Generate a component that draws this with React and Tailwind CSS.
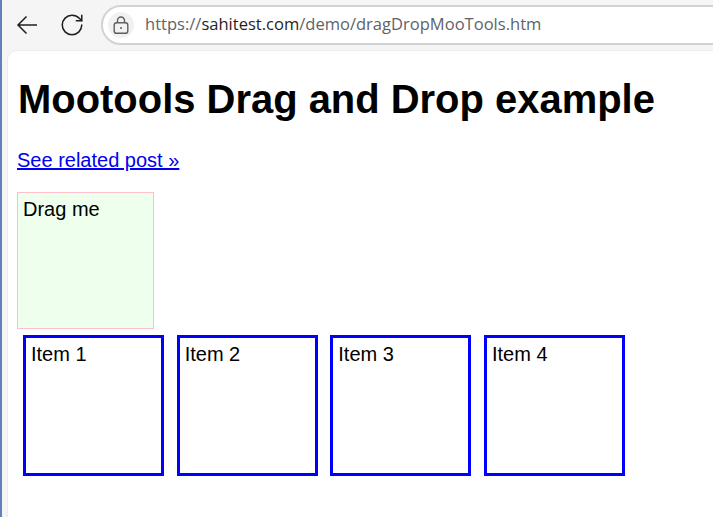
import { RotateCw } from 'lucide-react';

const items = ['Item 1', 'Item 2', 'Item 3', 'Item 4'];

export default function App() {
  return (
    <div className="w-[713px] h-[517px] overflow-hidden flex bg-[#f5f5f5] font-['Liberation_Sans',Arial,sans-serif] text-black">
      <div className="w-[2px] shrink-0 bg-[#6480b8]" />
      <div className="flex-1 min-w-0 flex flex-col">
        {/* Browser toolbar */}
        <div className="h-[50px] shrink-0 flex items-center pl-[14px] pb-[1px]">
          <svg width="22" height="20" viewBox="0 0 22 20" fill="none" stroke="#1f1f1f" strokeWidth="1.5">
            <path d="M21 10H2M10.5 1.5 2 10l8.5 8.5" />
          </svg>
          <RotateCw className="w-[26px] h-[26px] ml-[21px] text-[#1f1f1f]" strokeWidth={1.4} />
          <div className="ml-[16px] -mr-[20px] flex-1 h-[40px] flex items-center bg-white border-2 border-[#d3d3d3] rounded-l-[20px] pl-[5px]">
            <div className="w-[26px] h-[26px] rounded-full bg-[#f1f1f1] flex items-center justify-center">
              <svg width="18" height="20" viewBox="0 0 18 20" fill="none" stroke="#5f5f5f" strokeWidth="1.4">
                <path d="M5.5 8V5.5a3.5 3.5 0 0 1 7 0V8" />
                <rect x="2.2" y="7.7" width="13.6" height="10.6" rx="2.4" />
                <circle cx="9" cy="13" r="1" fill="#5f5f5f" stroke="none" />
              </svg>
            </div>
            <span className="ml-[11px] text-[16.55px] font-['Open_Sans',sans-serif] text-[#5f6368] whitespace-nowrap">
              https://<span className="text-[#1f1f1f]">sahitest.com</span>/demo/dragDropMooTools.htm
            </span>
          </div>
        </div>

        {/* Page */}
        <div className="flex-1 ml-[5px] bg-white rounded-tl-[10px] pl-[9px] border-t border-l border-[#ececec]">
          <h1 className="mt-[25px] ml-[1px] text-[39.95px] leading-[46px] font-bold whitespace-nowrap">
            Mootools Drag and Drop example
          </h1>
          <a href="#" className="block mt-[27px] text-[20px] leading-[23px] text-[#0000ee] underline w-fit">
            See related post »
          </a>
          <div className="mt-[20px] w-[137px] h-[137px] bg-[#eeffee] border border-[#ffc0cb] pl-[5px] pt-[5px] text-[20px] leading-[23px]">
            Drag me
          </div>
          <div className="mt-[6px] ml-[6px] flex gap-[12.67px]">
            {items.map((item) => (
              <div key={item} className="w-[141px] h-[141px] border-[3px] border-[#0000ff] pl-[5px] pt-[5px] text-[20px] leading-[23px]">
                {item}
              </div>
            ))}
          </div>
        </div>
      </div>
    </div>
  );
}
